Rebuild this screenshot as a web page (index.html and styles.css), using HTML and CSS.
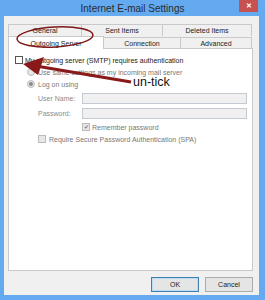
FILE: index.html
```html
<!DOCTYPE html>
<html lang="en">
<head>
<meta charset="UTF-8">
<meta name="viewport" content="width=device-width, initial-scale=1.0">
<title>Internet E-mail Settings</title>
<link rel="stylesheet" href="styles.css">
</head>
<body>
<div class="window">
    <div class="titlebar">
        <div class="title">Internet E-mail Settings</div>
        <div class="close">&#x2715;</div>
    </div>
    <div class="dialog">
        <div class="tabs">
            <div class="tab-row back">
                <div class="tab t-general">General</div>
                <div class="tab t-sent">Sent Items</div>
                <div class="tab t-deleted">Deleted Items</div>
            </div>
            <div class="tab-row front">
                <div class="tab t-outgoing active">Outgoing Server</div>
                <div class="tab t-connection">Connection</div>
                <div class="tab t-advanced">Advanced</div>
            </div>
        </div>
        <div class="panel">
            <div class="row main">
                <span class="check"></span>
                <span class="label">My outgoing server (SMTP) requires authentication</span>
            </div>
            <div class="row sub">
                <span class="radio"></span>
                <span class="label disabled">Use same settings as my incoming mail server</span>
            </div>
            <div class="row sub">
                <span class="radio on"></span>
                <span class="label disabled">Log on using</span>
            </div>
            <div class="field first">
                <span class="field-label">User Name:</span>
                <span class="input"></span>
            </div>
            <div class="field">
                <span class="field-label">Password:</span>
                <span class="input"></span>
            </div>
            <div class="row remember">
                <span class="check off ticked">&#x2714;</span>
                <span class="label disabled">Remember password</span>
            </div>
            <div class="row spa">
                <span class="check off"></span>
                <span class="label disabled">Require Secure Password Authentication (SPA)</span>
            </div>
        </div>
        <div class="buttons">
            <button class="btn default">OK</button>
            <button class="btn">Cancel</button>
        </div>
    </div>

    <!-- annotations drawn on top of the screenshot -->
    <svg class="overlay" width="265" height="300" viewBox="0 0 265 300">
        <ellipse cx="55" cy="37" rx="38" ry="10" transform="rotate(-3 55 37)" fill="none" stroke="#7e1616" stroke-width="1.5"/>
        <line x1="131" y1="82" x2="36" y2="66" stroke="#8a1919" stroke-width="3.2"/>
        <polygon points="23,64 44,57 38,75" fill="#8a1919"/>
    </svg>
    <div class="note">un-tick</div>
</div>
</body>
</html>
```

FILE: styles.css
```css
body {
    margin: 0;
    font-family: "Liberation Sans", Arial, sans-serif;
    background-color: #63aaf0;
}

.window {
    position: relative;
    width: 265px;
    height: 300px;
    background-color: #63aaf0;
    overflow: hidden;
}

.titlebar {
    height: 16px;
    display: flex;
    justify-content: center;
    align-items: center;
}

.title {
    font-size: 10px;
    color: #2b2b2b;
    margin-top: 1px;
}

.close {
    position: absolute;
    top: 0;
    left: 239px;
    width: 19px;
    height: 12px;
    background-color: #c75050;
    color: #fff;
    font-size: 7px;
    font-weight: bold;
    display: flex;
    justify-content: center;
    align-items: center;
}

.dialog {
    margin: 0 6px 0 4px;
    height: 279px;
    background-color: #f0f0f0;
    padding: 8px 6px 0 4px;
    box-sizing: border-box;
    display: flex;
    flex-direction: column;
}

.tabs {
    display: flex;
    flex-direction: column;
    font-size: 7px;
    color: #222;
}

.tab-row {
    display: flex;
}

.tab-row.back {
    height: 12px;
}

.tab-row.front {
    height: 12px;
    align-items: flex-end;
}

.tab {
    box-sizing: border-box;
    height: 12px;
    border: 1px solid #c9c9c9;
    border-bottom: none;
    background-color: #f0f0f0;
    display: flex;
    justify-content: center;
    align-items: center;
    margin-right: -1px;
}

.tab-row.front .tab {
    height: 11px;
}

.tab-row.front .tab.active {
    height: 13px;
    margin-bottom: -1px;
    background-color: #fff;
    position: relative;
}

.t-general { width: 74px; }
.t-sent { width: 82px; }
.t-deleted { width: 90px; }
.t-outgoing { width: 96px; }
.t-connection { width: 78px; }
.t-advanced { width: 72px; }

.panel {
    box-sizing: border-box;
    width: 245px;
    height: 223px;
    background-color: #fff;
    border: 1px solid #c9c9c9;
    padding: 5px 0 0 6px;
    font-size: 7px;
    color: #222;
}

.row {
    display: flex;
    align-items: center;
    height: 12px;
}

.row.sub {
    padding-left: 12px;
}

.check {
    box-sizing: border-box;
    width: 8px;
    height: 8px;
    border: 1px solid #555;
    background-color: #fff;
    margin-right: 2px;
    flex-shrink: 0;
    display: flex;
    justify-content: center;
    align-items: center;
    font-size: 6px;
    line-height: 1;
    color: #7a7a7a;
}

.check.off {
    border-color: #bcbcbc;
    background-color: #e6e6e6;
}

.radio {
    box-sizing: border-box;
    width: 8px;
    height: 8px;
    border-radius: 50%;
    border: 1px solid #bcbcbc;
    background-color: #e6e6e6;
    margin-right: 3px;
    display: flex;
    justify-content: center;
    align-items: center;
}

.radio.on::after {
    content: "";
    width: 4px;
    height: 4px;
    border-radius: 50%;
    background-color: #8a8a8a;
}

.label.disabled {
    color: #777;
}

.field {
    display: flex;
    align-items: center;
    height: 11px;
    margin-top: 4px;
    padding-left: 23px;
}

.field.first {
    margin-top: 3px;
}

.field-label {
    width: 44px;
    color: #8a8a8a;
}

.input {
    box-sizing: border-box;
    width: 165px;
    height: 11px;
    border: 1px solid #c3cad2;
    background-color: #f0f0f0;
}

.row.remember {
    height: 10px;
    margin-top: 3px;
    padding-left: 67px;
}

.row.spa {
    height: 10px;
    margin-top: 2px;
    padding-left: 23px;
}

.row.spa .check {
    margin-right: 3px;
}

.buttons {
    display: flex;
    justify-content: flex-end;
    gap: 6px;
    margin-top: 6px;
}

.btn {
    box-sizing: border-box;
    width: 48px;
    height: 15px;
    padding: 0;
    border: 1px solid #acacac;
    background-color: #e5e5e5;
    font-family: "Liberation Sans", Arial, sans-serif;
    font-size: 7px;
    color: #222;
}

.btn.default {
    border-color: #3c7fb1;
    box-shadow: inset 0 0 0 1px #bcdcf4;
}

.overlay {
    position: absolute;
    top: 0;
    left: 0;
    pointer-events: none;
}

.note {
    position: absolute;
    left: 133px;
    top: 75px;
    font-size: 12.5px;
    color: #111;
}
```
